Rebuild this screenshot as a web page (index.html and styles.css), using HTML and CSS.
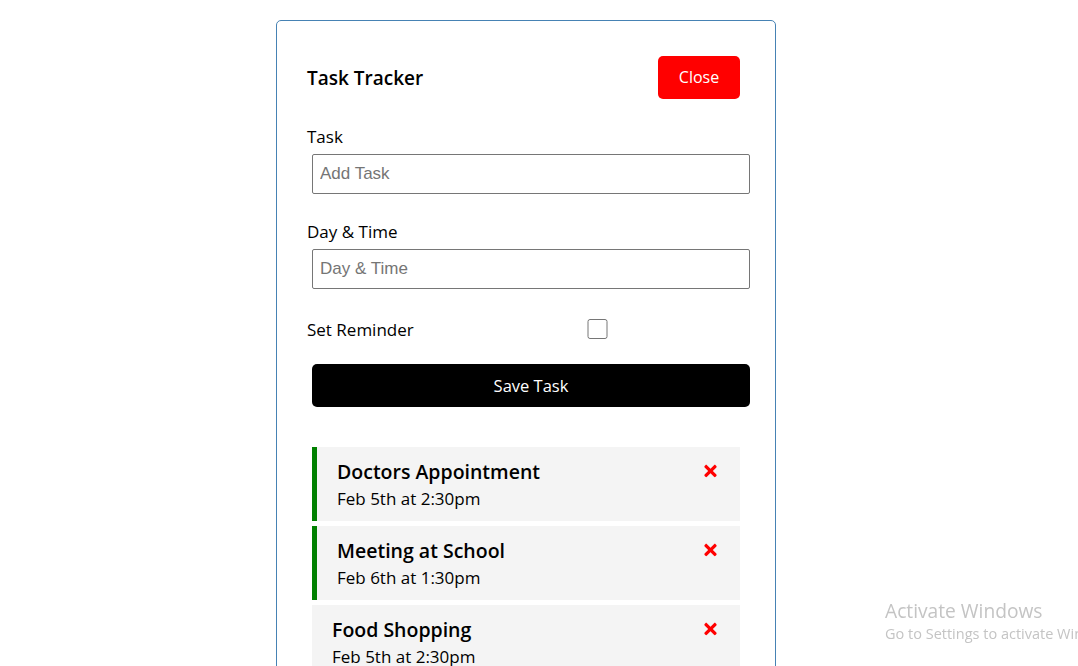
FILE: index.html
```html
<!DOCTYPE html>
<html lang="en">
<head>
    <meta charset="UTF-8">
    <title>Task Tracker</title>
    <link rel="stylesheet" href="styles.css">
</head>
<body>
<div class="container">
    <header class="header">
        <h1>Task Tracker</h1>
        <button class="btn btn-close">Close</button>
    </header>

    <form class="add-form">
        <div class="form-control">
            <label>Task</label>
            <input type="text" placeholder="Add Task">
        </div>
        <div class="form-control">
            <label>Day &amp; Time</label>
            <input type="text" placeholder="Day &amp; Time">
        </div>
        <div class="form-control form-control-check">
            <label>Set Reminder</label>
            <input type="checkbox">
        </div>
        <input type="submit" value="Save Task" class="btn btn-block">
    </form>

    <div class="task reminder">
        <h3>Doctors Appointment
            <svg class="del" viewBox="0 0 352 512"><path d="M242.72 256l100.07-100.07c12.28-12.28 12.28-32.19 0-44.48l-22.24-22.24c-12.28-12.28-32.19-12.28-44.48 0L176 189.28 75.930 89.21c-12.28-12.28-32.19-12.28-44.48 0L9.21 111.45c-12.28 12.28-12.28 32.19 0 44.48L109.28 256 9.21 356.07c-12.28 12.28-12.28 32.19 0 44.48l22.24 22.24c12.28 12.28 32.2 12.28 44.48 0L176 322.72l100.07 100.07c12.28 12.28 32.2 12.28 44.48 0l22.24-22.24c12.28-12.28 12.28-32.19 0-44.48L242.72 256z"/></svg>
        </h3>
        <p>Feb 5th at 2:30pm</p>
    </div>
    <div class="task reminder">
        <h3>Meeting at School
            <svg class="del" viewBox="0 0 352 512"><path d="M242.72 256l100.07-100.07c12.28-12.28 12.28-32.19 0-44.48l-22.24-22.24c-12.28-12.28-32.19-12.28-44.48 0L176 189.28 75.930 89.21c-12.28-12.28-32.19-12.28-44.48 0L9.21 111.45c-12.28 12.28-12.28 32.19 0 44.48L109.28 256 9.21 356.07c-12.28 12.28-12.28 32.19 0 44.48l22.24 22.240c12.28 12.28 32.2 12.28 44.48 0L176 322.72l100.07 100.07c12.28 12.28 32.2 12.28 44.48 0l22.24-22.24c12.28-12.28 12.28-32.19 0-44.48L242.72 256z"/></svg>
        </h3>
        <p>Feb 6th at 1:30pm</p>
    </div>
    <div class="task">
        <h3>Food Shopping
            <svg class="del" viewBox="0 0 352 512"><path d="M242.72 256l100.07-100.07c12.28-12.28 12.28-32.19 0-44.48l-22.24-22.24c-12.28-12.28-32.19-12.28-44.48 0L176 189.28 75.930 89.21c-12.28-12.28-32.19-12.28-44.48 0L9.21 111.45c-12.28 12.28-12.28 32.19 0 44.48L109.28 256 9.21 356.07c-12.28 12.28-12.28 32.19 0 44.48l22.24 22.240c12.28 12.28 32.2 12.28 44.48 0L176 322.72l100.07 100.07c12.28 12.28 32.2 12.28 44.48 0l22.24-22.24c12.28-12.28 12.28-32.19 0-44.48L242.72 256z"/></svg>
        </h3>
        <p>Feb 5th at 2:30pm</p>
    </div>
</div>

<div class="watermark">
    <div class="wm-title">Activate Windows</div>
    <div class="wm-sub">Go to Settings to activate Windows.</div>
</div>
</body>
</html>
```

FILE: styles.css
```css
* {
    box-sizing: border-box;
    margin: 0;
    padding: 0;
}

body {
    font-family: "Open Sans", "Liberation Sans", sans-serif;
    background-color: #fff;
    color: #000;
    overflow: hidden;
    padding-right: 26px;
}

.container {
    max-width: 500px;
    margin: 20px auto;
    overflow: auto;
    min-height: 300px;
    border: 1px solid steelblue;
    padding: 30px;
    border-radius: 5px;
}

.header {
    display: flex;
    justify-content: space-between;
    align-items: center;
    margin-bottom: 20px;
}

.header h1 {
    font-size: 19px;
    font-weight: 600;
}

.btn {
    display: inline-block;
    background: #000;
    color: #fff;
    border: none;
    padding: 10px 20px;
    margin: 5px;
    border-radius: 5px;
    cursor: pointer;
    text-decoration: none;
    font-size: 16.5px;
    line-height: 23px;
    font-family: inherit;
}

.btn-close {
    background: red;
    width: 82px;
    padding: 10px 0;
    font-size: 16px;
}

.btn-block {
    display: block;
    width: 100%;
}

.form-control {
    margin: 20px 0;
}

.form-control label {
    display: block;
    font-size: 17px;
    line-height: 25px;
}

.form-control input {
    width: 100%;
    height: 40px;
    margin: 5px;
    padding: 3px 7px;
    font-size: 17px;
    font-family: "Liberation Sans", Arial, sans-serif;
    border: 1px solid #767676;
    border-radius: 2px;
}

.form-control input::placeholder {
    color: #757575;
}

.form-control-check {
    display: flex;
    align-items: center;
    justify-content: space-between;
}

.form-control-check label {
    flex: 1;
}

.form-control-check input {
    flex: 2;
    height: 20px;
}

.add-form {
    margin-bottom: 40px;
}

.task {
    background: #f4f4f4;
    margin: 5px;
    padding: 10px 20px;
    cursor: pointer;
}

.task.reminder {
    border-left: 5px solid green;
}

.task h3 {
    display: flex;
    align-items: center;
    justify-content: space-between;
    font-size: 19.5px;
    font-weight: 600;
    line-height: 29px;
}

.task p {
    font-size: 17px;
    line-height: 25px;
}

.del {
    width: 13px;
    height: 18px;
    fill: red;
    margin-right: 3px;
    margin-top: -2px;
}

.watermark {
    position: fixed;
    left: 885px;
    top: 598px;
    color: #c4c4c4;
    font-family: "Open Sans", sans-serif;
    white-space: nowrap;
}

.wm-title {
    font-size: 19.2px;
    line-height: 26px;
}

.wm-sub {
    font-size: 14.5px;
    line-height: 20px;
}
```
